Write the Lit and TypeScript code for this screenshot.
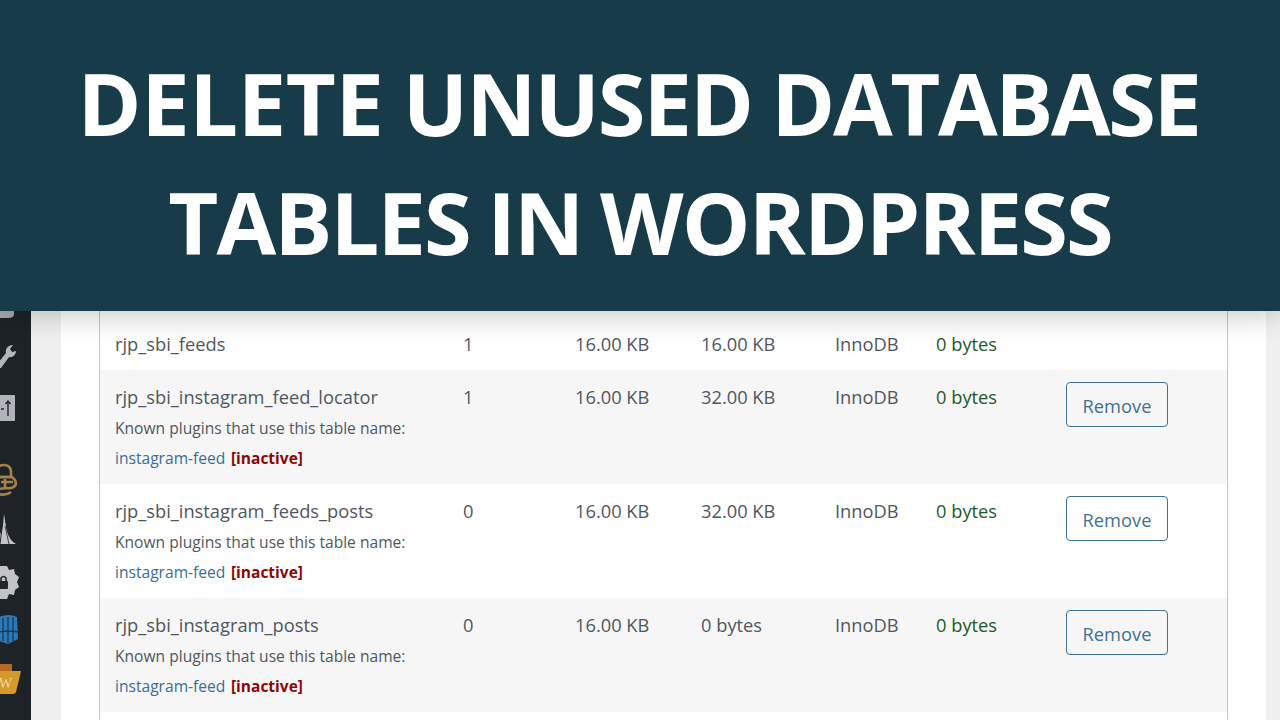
import { LitElement, html, css, svg } from "lit";
import { customElement } from "lit/decorators.js";

interface Row { name: string; rows: string; data: string; index: string; engine: string; over: string; alt: boolean; }

const ROWS: Row[] = [
  { name: "rjp_sbi_instagram_feed_locator", rows: "1", data: "16.00 KB", index: "32.00 KB", engine: "InnoDB", over: "0 bytes", alt: true },
  { name: "rjp_sbi_instagram_feeds_posts", rows: "0", data: "16.00 KB", index: "32.00 KB", engine: "InnoDB", over: "0 bytes", alt: false },
  { name: "rjp_sbi_instagram_posts", rows: "0", data: "16.00 KB", index: "0 bytes", engine: "InnoDB", over: "0 bytes", alt: true },
];

const ICONS = [
  { h: 14, g: svg`<path d="M-2 -6H14V3Q14 7 8 7H-2Z" fill="#a7aaad"/>` },
  { h: 67, g: svg`<path d="M-2 38L6 28C5 24 8 20 13 20L10 24L12 27L16 26C16 30 12 33 9 32L1 43H-2Z" fill="#b4b7ba"/>` },
  { h: 49, g: svg`<rect x="-2" y="3" width="17" height="26" rx="1" fill="#b0b4ba"/><path d="M1 17H4M8 9V24M5.500 12L8 9L10.500 12" stroke="#20262b" stroke-width="1.400" fill="none"/>` },
  { h: 72, g: svg`<g fill="none" stroke="#a5824a" stroke-width="2.600"><path d="M-1 36H11V30Q10 24 4 24Q-1 24 -2 27"/><path d="M-2 36H12Q17 40 15.500 44Q13 48 7 47L-2 48"/><path d="M1 41H13M5 38V47"/><path d="M-2 53Q6 55 11 51"/></g>` },
  { h: 53, g: svg`<path d="M4 1L6.500 17Q9 27 16 31H-2V25Q2 20 3 10Z" fill="#c3c4c7"/><path d="M3 8L0 31" stroke="#20262b" stroke-width="1"/><path d="M5 13L9 31" stroke="#20262b" stroke-width=".8"/>` },
  { h: 48, g: svg`<path d="M-1 0H7L9 4L14 3L15 8L19 11L17 16L19 21L15 24L14 29L9 28L7 33H-1Z" fill="#c3c4c7"/><rect x="-1" y="15" width="9" height="8" rx="1" fill="#20262b"/><path d="M1 15V12Q3.500 9 6 12V15" stroke="#20262b" stroke-width="1.600" fill="none"/>` },
  { h: 50, g: svg`<path d="M-1 3Q9 -1 17 3L18 25L8 30L-1 27Z" fill="#2a7ab8"/><path d="M3 4V27M8 3V29M13 3V27M-1 18Q8 16 18 18" stroke="#153a57" stroke-width="1.300" fill="none"/>` },
  { h: 60, g: svg`<path d="M-1 0H12V8H-1Z" fill="#b8691e"/><path d="M-1 7H21L16 28Q15 30 13 30H-1Z" fill="#d59a2c"/><text x="-1" y="24" font-family="Liberation Serif, serif" font-size="14" fill="#ecd9a3">W</text>` },
];

@customElement("app-root")
export class AppRoot extends LitElement {
  static styles = css`
    :host { display: flex; flex-direction: column; width: 1280px; height: 720px; overflow: hidden; background: #f0f0f1; font-family: "Open Sans", sans-serif; }
    .banner { height: 311px; flex: none; box-sizing: border-box; padding-top: 43px; background: #183b4a; position: relative; z-index: 1; box-shadow: 0 3px 28px rgba(0,0,0,.24); color: #fff; text-align: center; font-weight: 700; font-size: 86.500px; line-height: 119px; }
    .banner div { white-space: nowrap; }
    .l1 { letter-spacing: -1.650px; word-spacing: -1.500px; padding-right: 3px; }
    .l2 { letter-spacing: -1.900px; word-spacing: -4px; }
    .delete { letter-spacing: -.400px; }
    .unused { letter-spacing: -2px; }
    .database { letter-spacing: -2.400px; }
    .in { margin: 0 1px; }
    .body { flex: 1; display: flex; min-height: 0; }
    .side { width: 31px; flex: none; background: #1d2327; display: flex; flex-direction: column; }
    .side svg { display: block; width: 31px; flex: none; }
    .wrap { flex: 1; padding: 0 14px 0 30px; min-width: 0; }
    .card { background: #fff; height: 100%; padding: 0 38px; }
    .table { border: 1px solid #c3c4c7; border-width: 0 1px; height: 100%; color: #50575e; font-size: 18.300px; }
    .row { display: grid; grid-template-columns: 348px 112px 126px 134px 101px 130px 1fr; padding: 0 0 0 15px; line-height: 27px; box-sizing: border-box; }
    .row > div { white-space: nowrap; }
    .first { height: 59.250px; padding-top: 18.750px; }
    .tall { height: 114px; padding-top: 12.750px; }
    .alt { background: #f6f6f7; }
    .sub { font-size: 15.600px; line-height: 30px; }
    .sub.known { margin-top: 3px; }
    .sub a { color: #3a6e96; }
    .sub b { color: #8a0808; font-weight: 700; font-size: 15.500px; margin-left: 1.500px; }
    .green { color: #1f5a1f; }
    .btn { box-sizing: border-box; width: 102px; height: 45px; margin-top: -1px; border: 1px solid #3f7195; border-radius: 4px; color: #3f7195; font-size: 18.300px; line-height: 46px; text-align: center; }
  `;

  render() {
    return html`
      <div class="banner"><div class="l1"><span class="delete">DELETE</span> <span class="unused">UNUSED</span> <span class="database">DATABASE</span></div><div class="l2">TABLES <span class="in">IN</span> WORDPRESS</div></div>
      <div class="body">
        <div class="side">
          ${ICONS.map((i) => html`<svg height=${i.h} viewBox="0 0 31 ${i.h}">${i.g}</svg>`)}
        </div>
        <div class="wrap"><div class="card"><div class="table">
          <div class="row first">
            <div>rjp_sbi_feeds</div><div>1</div><div>16.00 KB</div><div>16.00 KB</div><div>InnoDB</div><div class="green">0 bytes</div><div></div>
          </div>
          ${ROWS.map((r) => html`
            <div class="row tall ${r.alt ? "alt" : ""}">
              <div>${r.name}<div class="sub known">Known plugins that use this table name:</div><div class="sub"><a>instagram-feed</a> <b>[inactive]</b></div></div>
              <div>${r.rows}</div><div>${r.data}</div><div>${r.index}</div><div>${r.engine}</div><div class="green">${r.over}</div>
              <div><div class="btn">Remove</div></div>
            </div>`)}
        </div></div></div>
      </div>
    `;
  }
}
